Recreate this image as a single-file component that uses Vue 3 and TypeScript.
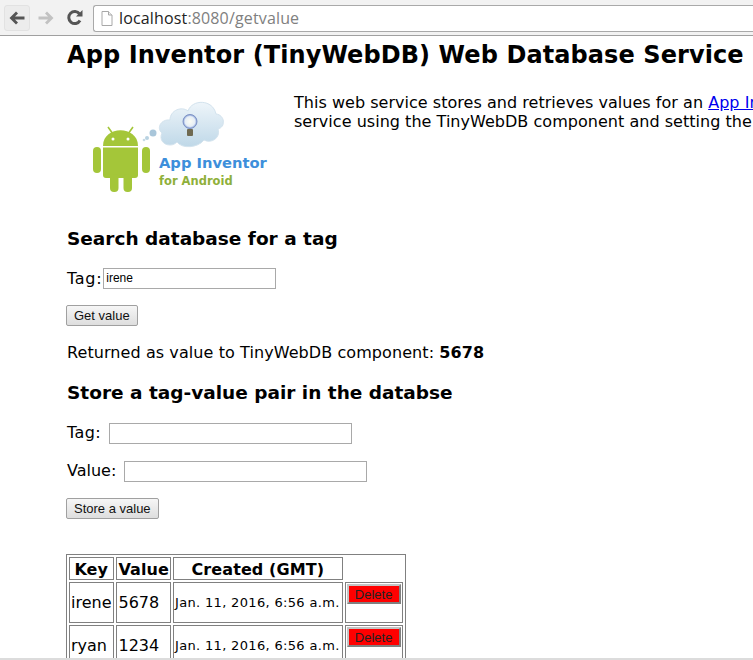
<template>
  <div class="window">
    <div class="toolbar">
      <div class="nav-btn back">
        <svg width="18" height="16" viewBox="0 0 18 16">
          <path d="M1.5 8 L8 1.5 L10 3.5 L7 6.5 H16.5 V9.5 H7 L10 12.5 L8 14.5 Z" fill="#555" />
        </svg>
      </div>
      <div class="nav-btn">
        <svg width="18" height="16" viewBox="0 0 18 16">
          <path d="M16.5 8 L10 1.5 L8 3.5 L11 6.5 H1.5 V9.5 H11 L8 12.5 L10 14.5 Z" fill="#c2c2c2" />
        </svg>
      </div>
      <div class="nav-btn">
        <svg width="18" height="18" viewBox="0 0 18 18">
          <path d="M14 11.5 A6 6 0 1 1 13.6 5" fill="none" stroke="#555" stroke-width="3" />
          <path d="M10 7.5 H16.5 V1 Z" fill="#555" />
        </svg>
      </div>
      <div class="omnibox">
        <svg class="page-icon" width="12" height="15" viewBox="0 0 12 15">
          <path d="M1 .5 H7.5 L11 4 V14.5 H1 Z" fill="#fff" stroke="#a8a8a8" />
          <path d="M7.5 .5 V4 H11" fill="#eee" stroke="#a8a8a8" />
        </svg>
        <span class="host">localhost</span><span class="rest">:8080/getvalue</span>
      </div>
    </div>

    <div class="page">
      <h1>App Inventor (TinyWebDB) Web Database Service</h1>

      <div class="intro">
        <svg class="logo" width="210" height="110" viewBox="0 0 210 110">
          <defs>
            <linearGradient id="cloud" x1="0" y1="0" x2="0" y2="1">
              <stop offset="0" stop-color="#eef5fa" />
              <stop offset="1" stop-color="#bfd8e8" />
            </linearGradient>
            <radialGradient id="bulb" cx="0.5" cy="0.5" r="0.5">
              <stop offset="0" stop-color="#fbfcf4" />
              <stop offset="0.7" stop-color="#e6eef6" />
              <stop offset="1" stop-color="#7f9ad6" />
            </radialGradient>
          </defs>
          <path d="M100 55 C93 55 89 49 92 43 C86 38 91 29 100 30 C100 20 112 16 118 21 C122 9 143 9 146 24 C155 25 156 37 148 39 C151 48 141 54 134 50 C128 58 112 59 107 52 C105 54 103 55 100 55 Z" fill="url(#cloud)" stroke="#d3e3ee" />
          <circle cx="120" cy="31.5" r="7" fill="url(#bulb)" stroke="#7f93c4" />
          <rect x="117" y="39" width="6" height="7" rx="1" fill="#6f6a52" />
          <circle cx="83" cy="43" r="3.5" fill="#a9c6da" />
          <circle cx="77" cy="48" r="2" fill="#b9d2e2" />
          <circle cx="74" cy="50" r="1.3" fill="#c6dae6" />
          <path d="M38 37 L43 44 M63 37 L58 44" stroke="#a4c639" stroke-width="1.6" />
          <path d="M33 56 C33 35 68 35 68 56 Z" fill="#a4c639" />
          <circle cx="43" cy="49" r="1.5" fill="#fff" />
          <circle cx="58" cy="49" r="1.5" fill="#fff" />
          <path d="M33 57.5 H68 V85 Q68 88 65 88 H36 Q33 88 33 85 Z" fill="#a4c639" />
          <rect x="23" y="57" width="8" height="26" rx="4" fill="#a4c639" />
          <rect x="72" y="57" width="8" height="26" rx="4" fill="#a4c639" />
          <rect x="40" y="84" width="8.5" height="18" rx="4" fill="#a4c639" />
          <rect x="53.5" y="84" width="8.5" height="18" rx="4" fill="#a4c639" />
          <text x="89" y="78" class="logo-title">App Inventor</text>
          <text x="89" y="95" class="logo-sub">for Android</text>
        </svg>
        <p>
          This web service stores and retrieves values for an <a href="#">App Inventor</a> app.
          <br />service using the TinyWebDB component and setting the ServiceURL property.
        </p>
      </div>

      <h2 class="search-title">Search database for a tag</h2>
      <div class="tag-row">
        Tag:<input class="field search-field" type="text" value="irene" />
      </div>
      <button class="btn get-btn">Get value</button>
      <div class="result">Returned as value to TinyWebDB component: <b>5678</b></div>

      <h2 class="store-title">Store a tag-value pair in the databse</h2>
      <div class="store-row first-row">Tag: <input class="field store-tag" type="text" /></div>
      <div class="store-row">Value: <input class="field store-tag" type="text" /></div>
      <button class="btn store-btn">Store a value</button>

      <table class="records" cellspacing="2">
        <thead>
          <tr>
            <th>Key</th>
            <th class="value">Value</th>
            <th>Created (GMT)</th>
          </tr>
        </thead>
        <tbody>
          <tr v-for="row in rows" :key="row.key">
            <td>{{ row.key }}</td>
            <td class="value">{{ row.value }}</td>
            <td class="created">{{ row.created }}</td>
            <td class="action"><button class="delete">Delete</button></td>
          </tr>
        </tbody>
      </table>
    </div>

    <div class="bottom-edge"></div>
  </div>
</template>

<script setup lang="ts">
interface Row {
  key: string;
  value: string;
  created: string;
}

const rows: Row[] = [
  { key: "irene", value: "5678", created: "Jan. 11, 2016, 6:56 a.m." },
  { key: "ryan", value: "1234", created: "Jan. 11, 2016, 6:56 a.m." },
];
</script>

<style>
html,
body {
  margin: 0;
  overflow: hidden;
  background: #fff;
}
</style>

<style scoped>
.window {
  position: relative;
  width: 753px;
  height: 660px;
  overflow: hidden;
  font-family: "DejaVu Sans", Verdana, sans-serif;
  font-size: 16px;
  color: #000;
}

.toolbar {
  display: flex;
  align-items: center;
  box-sizing: border-box;
  height: 36px;
  padding: 4px 0 3px 4px;
  background: #f2f2f2;
  border-bottom: 1px solid #a0a0a0;
}

.nav-btn {
  display: flex;
  align-items: center;
  justify-content: center;
  box-sizing: border-box;
  width: 26px;
  height: 26px;
  margin-right: 3px;
}

.back {
  background: #ececec;
  border: 1px solid #e2e2e2;
  border-radius: 3px;
}

.omnibox {
  display: flex;
  align-items: center;
  box-sizing: border-box;
  flex: 1;
  height: 27px;
  margin-left: 2px;
  margin-right: -4px;
  padding-left: 7px;
  background: #fff;
  border: 1px solid #a9a9a9;
  border-right: none;
  border-radius: 3px 0 0 3px;
  font-family: "Open Sans", "Liberation Sans", sans-serif;
  font-size: 16px;
  letter-spacing: 0.15px;
}

.page-icon {
  margin-right: 6px;
}

.host {
  color: #222;
}

.rest {
  color: #808080;
}

.page {
  padding-left: 67px;
  white-space: nowrap;
}

h1 {
  margin: 5px 0 0;
  font-size: 24px;
  line-height: 28px;
  font-weight: bold;
  letter-spacing: 0.09px;
}

.intro {
  display: flex;
  margin-top: 21px;
}

.logo {
  flex: none;
  margin-left: 3px;
}

.logo-title {
  font-family: "DejaVu Sans", sans-serif;
  font-size: 14.7px;
  font-weight: bold;
  fill: #3d8fdb;
}

.logo-sub {
  font-family: "DejaVu Sans", sans-serif;
  font-size: 11.5px;
  font-weight: bold;
  fill: #8fb03a;
}

.intro p {
  margin: 3px 0 0 14px;
  line-height: 19px;
  letter-spacing: 0.03px;
}

a {
  color: #00e;
}

h2 {
  margin: 0;
  font-size: 18.5px;
  line-height: 22px;
  font-weight: bold;
}

.search-title {
  margin-top: 28px;
}

.tag-row {
  display: flex;
  align-items: center;
  margin-top: 17px;
  height: 22px;
  letter-spacing: 0.7px;
}

.field {
  box-sizing: border-box;
  height: 21px;
  padding: 1px 2px;
  background: #fff;
  border: 1px solid #a9a9a9;
  font-family: "Liberation Sans", Arial, sans-serif;
  font-size: 12px;
  letter-spacing: 0;
}

.search-field {
  width: 173px;
  margin-left: 1px;
}

.btn {
  display: block;
  box-sizing: border-box;
  height: 21px;
  margin-left: -1px;
  padding: 0 7px;
  background: linear-gradient(#f6f6f6, #dedede);
  border: 1px solid #a0a0a0;
  border-radius: 2px;
  font-family: "Liberation Sans", Arial, sans-serif;
  font-size: 13px;
  color: #111;
}

.get-btn {
  margin-top: 16px;
}

.result {
  margin-top: 17px;
  line-height: 20px;
  letter-spacing: 0.08px;
}

.store-title {
  margin-top: 19px;
}

.store-row {
  margin-top: 18px;
  height: 20px;
  line-height: 20px;
}

.store-title + .store-row {
  margin-top: 19px;
}

.first-row {
  letter-spacing: 0.4px;
}

.store-tag {
  width: 243px;
  margin-left: 3px;
  vertical-align: top;
}

.first-row .store-tag {
  margin-left: 2px;
}

.store-btn {
  margin-top: 17px;
}

.records {
  margin-top: 35px;
  margin-left: -1px;
  border: 1px solid #808080;
  border-spacing: 2px;
  border-collapse: separate;
}

th,
td {
  border: 1px solid #808080;
  padding: 1px;
}

th {
  padding-top: 2px;
  padding-bottom: 0;
  font-size: 16px;
  line-height: 19px;
  letter-spacing: 0.1px;
}

td {
  height: 37px;
  font-size: 16px;
}

.value {
  padding-left: 2px;
  padding-right: 1px;
}

.created {
  padding-right: 2px;
  font-size: 13px;
  letter-spacing: 0.33px;
}

.action {
  vertical-align: top;
}

.delete {
  display: block;
  width: 54px;
  height: 20px;
  padding: 0;
  background: #f00;
  border: 2px solid;
  border-color: #c4c4c4 #808080 #808080 #c4c4c4;
  font-family: "Liberation Sans", Arial, sans-serif;
  font-size: 13px;
  color: #222;
}

.bottom-edge {
  position: absolute;
  left: 0;
  right: 0;
  bottom: 0;
  height: 2px;
  background: #dcdcdc;
}
</style>
